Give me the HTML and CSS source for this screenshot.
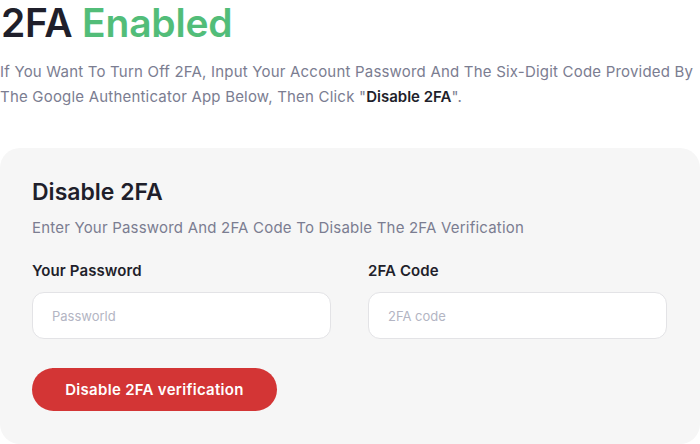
FILE: index.html
```html
<!DOCTYPE html>
<html>
<head>
<meta charset="utf-8">
<link rel="stylesheet" href="styles.css">
</head>
<body>
<div class="page">
  <h1 class="title">2FA <span class="ok">Enabled</span></h1>
  <p class="intro">If You Want To Turn Off 2FA, Input Your Account Password And The Six-Digit Code Provided By The Google Authenticator App Below, Then Click "<strong>Disable 2FA</strong>".</p>
  <section class="card">
    <h2 class="card-title">Disable 2FA</h2>
    <p class="card-sub">Enter Your Password And 2FA Code To Disable The 2FA Verification</p>
    <div class="fields">
      <label class="field">
        <span class="label">Your Password</span>
        <input class="input" type="password" placeholder="Passworld">
      </label>
      <label class="field">
        <span class="label">2FA Code</span>
        <input class="input" type="text" placeholder="2FA code">
      </label>
    </div>
    <button class="btn" type="button">Disable 2FA verification</button>
  </section>
</div>
</body>
</html>
```
FILE: styles.css
```css
* { box-sizing: border-box; }
html, body { margin: 0; padding: 0; background: #ffffff; }
body {
  font-family: Inter, "Noto Sans", sans-serif;
  color: #1f1f2b;
}
.page {
  width: 700px;
  height: 444px;
  overflow: hidden;
}
.title {
  margin: 0;
  padding-left: 1px;
  font-size: 39px;
  line-height: 46px;
  font-weight: 600;
  letter-spacing: -0.2px;
  color: #1f1f2b;
}
.ok { color: #52bd79; }
.intro {
  margin: 13px 0 0;
  font-size: 15px;
  line-height: 25px;
  color: #7b7d91;
  letter-spacing: 0.2px;
}
.intro strong { color: #1f1f2b; font-weight: 600; letter-spacing: 0; }
.card {
  margin-top: 39px;
  background: #f6f6f6;
  border-radius: 20px;
  padding: 28px 33px 32px 32px;
  height: 296px;
}
.card-title {
  margin: 0;
  font-size: 23px;
  line-height: 32px;
  font-weight: 600;
  color: #1f1f2b;
  letter-spacing: 0;
}
.card-sub {
  margin: 9px 0 0;
  font-size: 15px;
  line-height: 22px;
  color: #7b7d91;
  letter-spacing: 0.2px;
}
.fields {
  display: grid;
  grid-template-columns: 1fr 1fr;
  column-gap: 37px;
  margin-top: 21px;
}
.field { display: flex; flex-direction: column; }
.label {
  font-size: 15px;
  line-height: 22px;
  font-weight: 600;
  color: #1f1f2b;
  letter-spacing: 0.1px;
}
.input {
  margin-top: 10px;
  height: 47px;
  border: 1px solid #e3e3e6;
  border-radius: 12px;
  background: #ffffff;
  padding: 0 19px;
  font-family: Inter, "Noto Sans", sans-serif;
  font-size: 13px;
  color: #1f1f2b;
  outline: none;
}
.input::placeholder { color: #b3b5c3; }
.btn {
  display: block;
  margin-top: 29px;
  width: 245px;
  height: 43px;
  border: none;
  border-radius: 22px;
  background: #d33535;
  color: #ffffff;
  font-family: Inter, "Noto Sans", sans-serif;
  font-size: 15px;
  font-weight: 600;
  letter-spacing: 0.3px;
  cursor: pointer;
}
```
